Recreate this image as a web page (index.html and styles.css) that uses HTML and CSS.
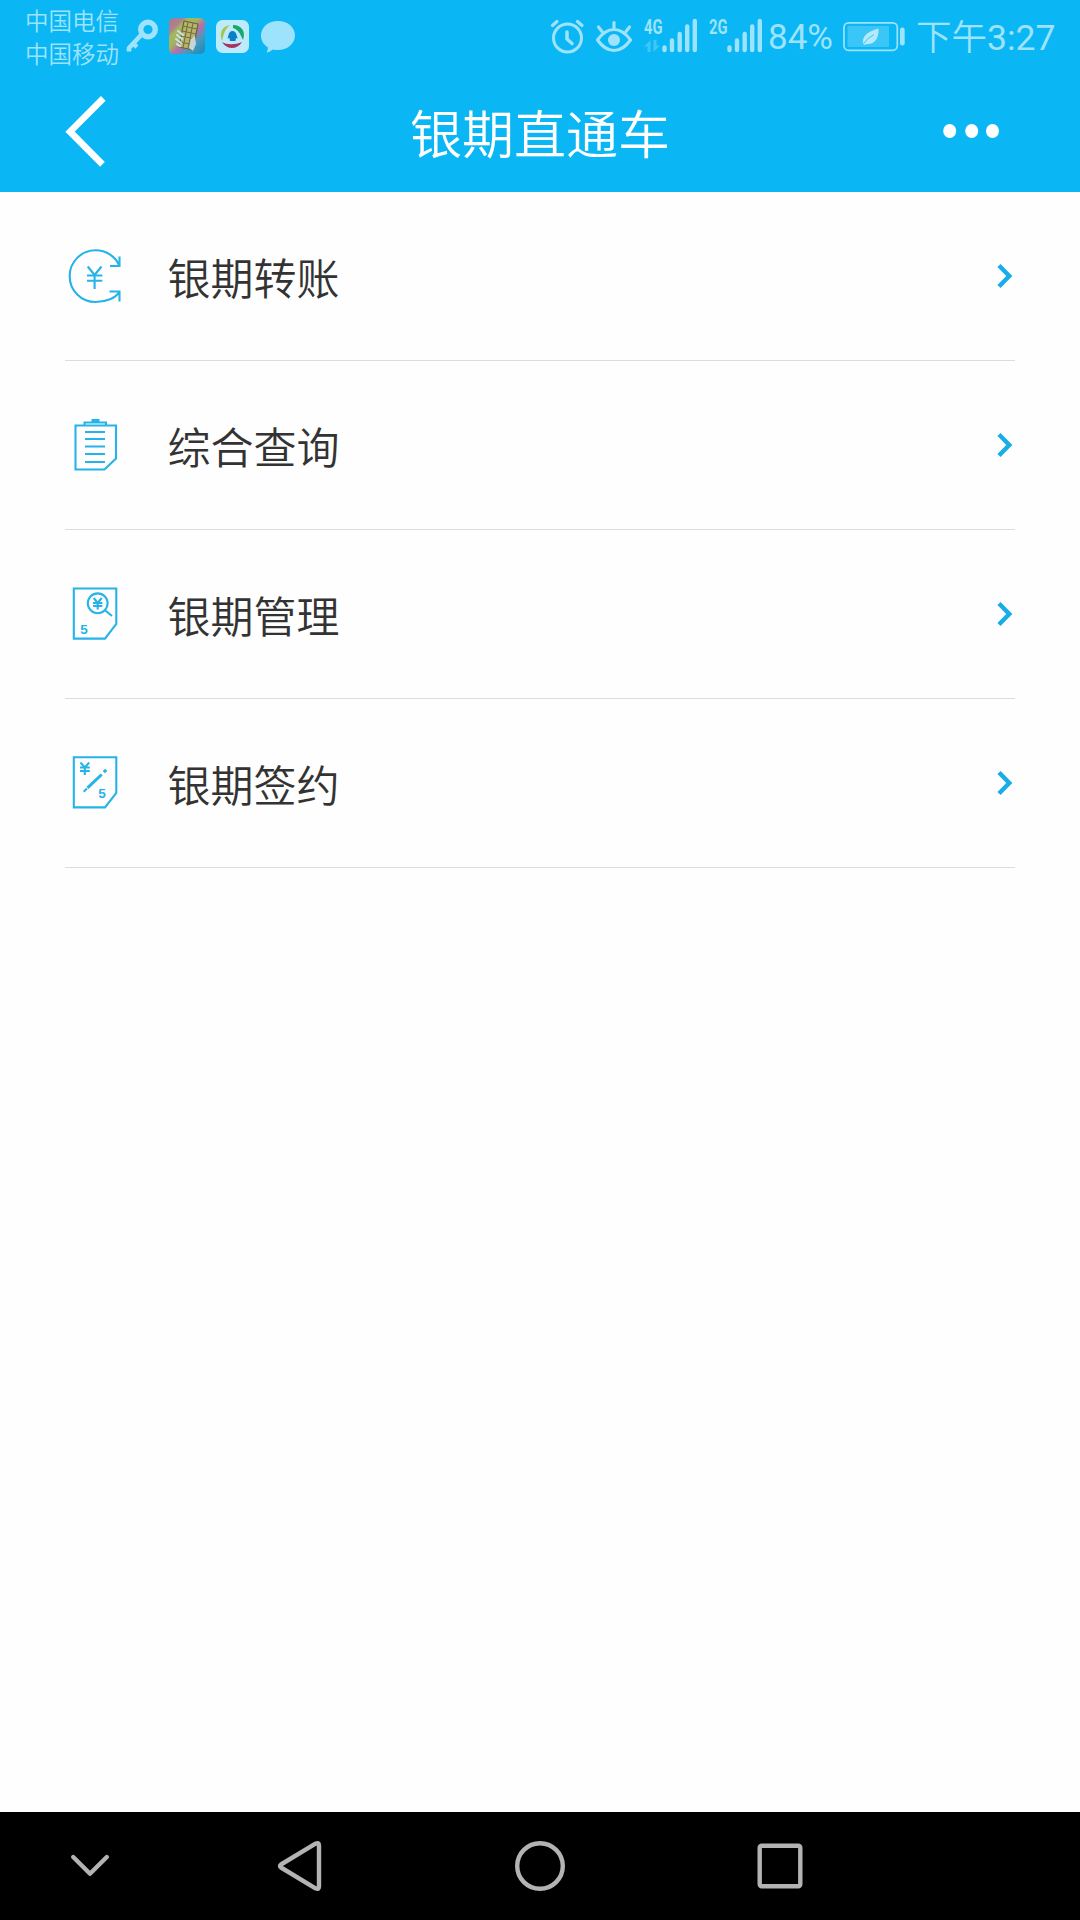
FILE: index.html
```html
<!DOCTYPE html>
<html lang="zh-CN">
<head>
<meta charset="utf-8">
<title>银期直通车</title>
<link rel="stylesheet" href="styles.css">
</head>
<body>
<div class="screen">
  <div class="status">
    <div class="carriers"><span>中国电信</span><span>中国移动</span></div>
    <div class="notices">
      <svg width="36" height="72" viewBox="125 0 36 72"><circle cx="148" cy="29.5" r="7.3" fill="none" stroke="#9de3fb" stroke-width="5.4"/><path d="M142 34L129 48V51.500M133 43.500L137 47" fill="none" stroke="#9de3fb" stroke-width="4.6" stroke-linejoin="round"/></svg>
      <svg width="36" height="72" viewBox="169 0 36 72">
        <defs><linearGradient id="card" x1="0" y1="0" x2="1" y2="1"><stop offset="0" stop-color="#a9798c"/><stop offset=".2" stop-color="#ad8290"/><stop offset=".28" stop-color="#a6b75c"/><stop offset=".42" stop-color="#a1b45e"/><stop offset=".55" stop-color="#b96fa6"/><stop offset=".72" stop-color="#4999bd"/><stop offset="1" stop-color="#1489bd"/></linearGradient></defs>
        <rect x="169" y="18" width="36" height="36" rx="5" fill="url(#card)"/>
        <path d="M184 21L198 24L193 50L179 47Z" fill="#b8b56a" stroke="#635f45" stroke-width="1.2" stroke-linejoin="round"/>
        <path d="M188 22L183 48M193 23L188 49M183 26L197 29M182 31L196 34M181 36L195 39M180 42L194 45" fill="none" stroke="#777044" stroke-width="1.2"/>
        <path d="M178 31L183 35M177 35L182 39M176 39L181 43M177 44L180 46" stroke="#cbe0e1" stroke-width="2.2" stroke-linecap="round"/>
        <path d="M191 39L195 36L196 44L193 51L189 48Z" fill="#c2d7d7"/>
      </svg>
      <svg width="34" height="72" viewBox="216 0 34 72">
        <rect x="216" y="20" width="33" height="33" rx="6.5" fill="#bdebfc"/>
        <path d="M230 25C222 26 219 33 222 41C224 34 224 30 230 25Z" fill="#a4c84c"/>
        <path d="M233 25C242 25 246 32 243 40C240 34 239 30 233 28Z" fill="#18a86b"/>
        <path d="M222 42C227 45 235 45 242 42C237 50 227 50 222 42Z" fill="#a73560"/>
        <path d="M232.500 31C228.500 31 229 35 227.500 38.500L229.500 38L230 41H235.500L236 38L238 38.500C236 35 236.500 31 232.500 31Z" fill="#087fc7"/>
      </svg>
      <svg width="36" height="72" viewBox="260 0 36 72"><path d="M278 21C287.500 21 295 27 295 35.500C295 44 287 50 278 50Q275 50 273 49.500Q270 52 266.500 52.500Q268 50.500 268 47.500C264 45 261 41 261 35.500C261 27 268.500 21 278 21Z" fill="#9de3fb"/></svg>
    </div>
    <div class="indicators">
      <svg width="36" height="72" viewBox="550 0 36 72" fill="none" stroke="#9de3fb" stroke-linecap="round" stroke-linejoin="round"><circle cx="567.500" cy="38" r="14" stroke-width="3"/><path d="M567 32V39L572 43.500" stroke-width="3.500"/><path d="M552.500 25.500L557 21.500M582 25.500L577.500 21.500" stroke-width="3.200"/></svg>
      <svg class="eye" width="38" height="72" viewBox="595 0 38 72" fill="none" stroke="#9de3fb" stroke-width="3.200" stroke-linecap="round" stroke-linejoin="round"><path d="M597.500 40Q605 29.500 614 29.500T630.500 40Q623 50.500 614 50.500T597.500 40ZM614 29V22.500M602 31.500L598.500 27M626 31.500L629.500 27"/><circle cx="614" cy="40" r="6" fill="#9de3fb" stroke="none"/></svg>
      <svg class="sig" width="54" height="72" viewBox="644 0 54 72"><text class="gen" x="644" y="33.500" textLength="18.500" lengthAdjust="spacingAndGlyphs">4G</text><path d="M650.500 40V52H647.500V46.500H644ZM653.500 52V40H656.500V45.500H660Z" fill="#3fc7f7"/><path d="M664.500 47.500V50M672 40.500V50M679.700 34V50M687.200 26.500V50M694.800 21V50" stroke="#9de3fb" stroke-width="4.400" stroke-linecap="round"/></svg>
      <svg class="sig2" width="54" height="72" viewBox="709 0 54 72"><text class="gen" x="709" y="33.500" textLength="18.500" lengthAdjust="spacingAndGlyphs">2G</text><path d="M729.500 47.500V50M737 40.500V50M744.700 34V50M752.200 26.500V50M759.800 21V50" stroke="#9de3fb" stroke-width="4.400" stroke-linecap="round"/></svg>
      <span class="percent">84%</span>
      <svg width="63" height="72" viewBox="843 0 63 72"><rect x="844" y="22.800" width="53.300" height="27.500" rx="4.500" fill="none" stroke="#9de3fb" stroke-width="1.700"/><rect x="847.500" y="26" width="41.500" height="21" rx="1" fill="#3ac7f7"/><rect x="900" y="27.500" width="4.700" height="18" rx="2.300" fill="#9de3fb"/><path d="M878.500 28.500C879 38 875 44.500 867 44L864 45L863 44C862 36 867 32 878.500 28.500Z" fill="#b5eafc"/><path d="M863 44.500Q867 38 874 34.500" fill="none" stroke="#3ac7f7"/></svg>
      <span class="clock">下午<span class="digits">3:27</span></span>
    </div>
  </div>
  <header class="header">
    <svg class="back" width="48" height="80" viewBox="62 92 48 80"><path d="M103.300 98.300L70 131.700L102.500 164.400" fill="none" stroke="#fff" stroke-width="6.600"/></svg>
    <h1>银期直通车</h1>
    <svg class="more" width="60" height="20" viewBox="941 121 60 20" fill="#fff"><ellipse cx="949.700" cy="131" rx="6.500" ry="6.900"/><ellipse cx="971.700" cy="131" rx="6.500" ry="6.900"/><ellipse cx="992.500" cy="131" rx="6.500" ry="6.900"/></svg>
  </header>
  <main class="list">
    <div class="row">
      <svg class="icon" viewBox="0 0 60 60"><path d="M54 19C50 10 41 4.300 30.500 4.300A25.800 25.800 0 0 0 30.500 56C41 56 51 52 54 46M45 20H54.500V10.500M44.500 45.500H54.500V55.500"/><path d="M22.700 20.500L29.600 29L36.500 20.500M29.600 29V43M22 29.500H37.300M22 34.700H37.300"/></svg>
      <span class="label">银期转账</span>
      <svg class="chev" viewBox="0 0 18 28"><path d="M2 3.500L12.300 14L2 24.500"/></svg>
    </div>
    <div class="row">
      <svg class="icon" viewBox="0 0 60 60"><path d="M10.500 10.500H51V43.500L39.500 54.500H10.500ZM19.500 10V7.500H41V10M20 17H40M20 24H40M20 31.500H40M20 39H40M20 47H40"/><path class="solid" d="M26.500 4H34.500V7.500H26.500Z"/></svg>
      <span class="label">综合查询</span>
      <svg class="chev" viewBox="0 0 18 28"><path d="M2 3.500L12.300 14L2 24.500"/></svg>
    </div>
    <div class="row">
      <svg class="icon" viewBox="0 0 60 60"><path d="M8.800 4.500H51.300V40L40 54.600H8.800Z"/><circle cx="32.700" cy="19.300" r="9.900"/><path d="M40 26.300L47 32M28.700 14L32.700 19L36.700 14M32.700 19V25.500M28 19H37.400M28 22H37.400"/><text x="15.300" y="50.300">5</text></svg>
      <span class="label">银期管理</span>
      <svg class="chev" viewBox="0 0 18 28"><path d="M2 3.500L12.300 14L2 24.500"/></svg>
    </div>
    <div class="row">
      <svg class="icon" viewBox="0 0 60 60"><path d="M8.800 4.300H51.300V40L40 54.400H8.800Z"/><path d="M15.500 9.500L19.800 14.500L24.200 9.500M19.800 14V22M15 14.500H24.800M15 18H24.800M18.700 38.800L22 35.500"/><path class="pen" d="M22.500 34.800L36.700 21.500M38.800 19.200L41.300 16.800"/><text x="33.300" y="45.300">5</text></svg>
      <span class="label">银期签约</span>
      <svg class="chev" viewBox="0 0 18 28"><path d="M2 3.500L12.300 14L2 24.500"/></svg>
    </div>
  </main>
  <nav class="nav">
    <svg class="first" width="180" height="108" viewBox="0 1812 180 108"><path d="M73.200 1857L90 1873.800L106.800 1857"/></svg>
    <svg width="240" height="108" viewBox="180 1812 240 108"><path d="M281 1864.500L315.500 1843.700Q319 1842 319 1845.500V1886.500Q319 1890 315.500 1888.300L281 1867.500Q279 1866 281 1864.500Z"/></svg>
    <svg width="240" height="108" viewBox="420 1812 240 108"><circle cx="540" cy="1866" r="22.800"/></svg>
    <svg width="240" height="108" viewBox="660 1812 240 108"><rect x="759.700" y="1845.700" width="40.600" height="40.600" rx="2"/></svg>
  </nav>
</div>
</body>
</html>
```
FILE: styles.css
```css
* { box-sizing: border-box; }
body { margin: 0; background: #fff; font-family: Roboto, "Noto Sans CJK SC", sans-serif; }
svg { display: block; flex: none; }
.screen { width: 1080px; height: 1920px; display: flex; flex-direction: column; background: #fefefe; }

.status { height: 72px; display: flex; align-items: flex-start; padding: 0 23px 0 25px; background: #0bb6f4; color: #9de3fb; }
.carriers { width: 100px; padding-top: 6px; display: flex; flex-direction: column; font-size: 23.500px; line-height: 33px; font-weight: 350; white-space: nowrap; }
.notices { display: flex; gap: 8px; }
.notices svg:nth-child(3) { margin-left: 3px; }
.notices svg:nth-child(4) { margin-left: 2px; }
.indicators { margin-left: auto; display: flex; }
.eye { margin-left: 9px; }
.sig, .sig2 { margin-left: 11px; }
.gen { font: 700 20px Roboto, sans-serif; fill: #9de3fb; }
.percent { width: 75px; margin-left: 5px; font-size: 35px; line-height: 76px; font-weight: 400; white-space: nowrap; }
.clock { width: 141px; margin-left: 10px; font-size: 35.500px; line-height: 76px; font-weight: 350; white-space: nowrap; }
.digits { font-weight: 400; }

.header { height: 120px; display: flex; align-items: flex-start; justify-content: space-between; padding: 0 79px 0 62px; background: #0bb6f4; color: #fff; }
.back { margin-top: 20px; }
.header h1 { width: 260px; margin: 0 0 0 29px; font-size: 52px; line-height: 130px; font-weight: 350; white-space: nowrap; }
.more { margin-top: 49px; }

.list { flex: 1; padding: 0 65px; }
.row { height: 169px; display: flex; align-items: center; border-bottom: 1px solid #dcdcdc; }
.icon { width: 60px; height: 60px; fill: none; stroke: #25b3e8; stroke-width: 2.100; }
.icon .solid { fill: #25b3e8; stroke: none; }
.icon .pen { stroke-width: 3; }
.icon text { fill: #25b3e8; stroke: none; font: 700 13.500px "Liberation Sans", sans-serif; }
.label { flex: 1; margin-left: 42.500px; padding-top: 8px; font-size: 43px; line-height: 64px; font-weight: 350; color: #333; }
.chev { width: 18px; height: 28px; fill: none; stroke: #18ade6; stroke-width: 4.400; }

.nav { height: 108px; display: flex; background: #000; }
.nav svg { fill: none; stroke: #b3b3b3; stroke-width: 4.400; stroke-linecap: round; stroke-linejoin: round; }
```
